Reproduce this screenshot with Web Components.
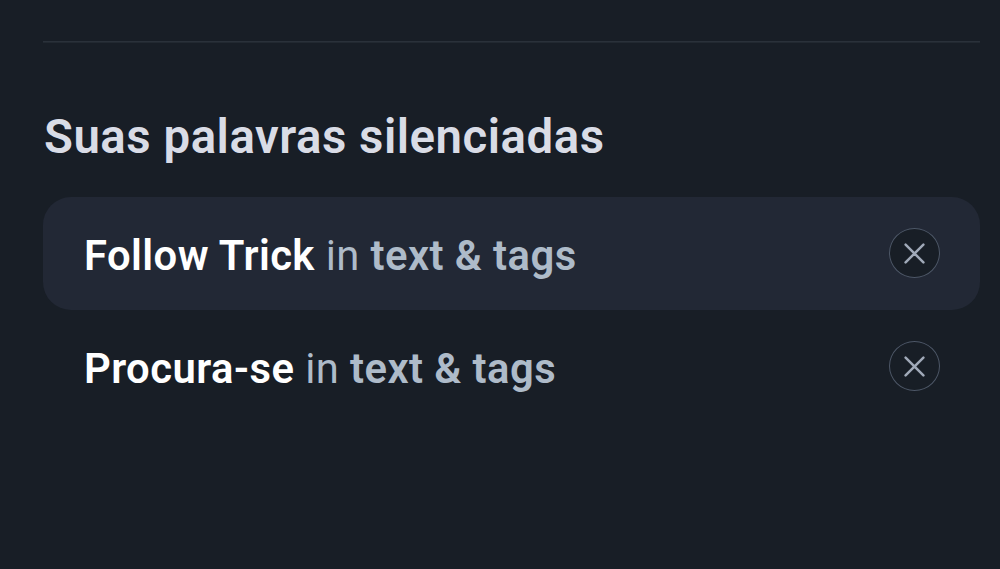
<!DOCTYPE html>
<html lang="pt-BR">
<head>
<meta charset="utf-8">
<title>Palavras silenciadas</title>
<style>
  body {
    margin: 0;
    background: #181e26;
    font-family: Roboto, "Liberation Sans", sans-serif;
  }
</style>
</head>
<body>
<muted-words>
  <span slot="title">Suas palavras silenciadas</span>
  <muted-word-row active>Follow Trick<span slot="target">text &amp; tags</span></muted-word-row>
  <muted-word-row>Procura-se<span slot="target">text &amp; tags</span></muted-word-row>
</muted-words>

<script>
class MutedWords extends HTMLElement {
  constructor() {
    super();
    this.attachShadow({ mode: 'open' });
    this.shadowRoot.innerHTML = `
      <style>
        :host {
          display: block;
          box-sizing: border-box;
          height: 569px;
          padding: 41px 20px 0 43px;
          overflow: hidden;
        }
        hr {
          margin: 0;
          border: 0;
          height: 2px;
          background: linear-gradient(#2a313a 50%, #222931 50%);
        }
        h2 {
          margin: 64px 0 0;
          padding-left: 1px;
          font-size: 47.4px;
          line-height: 60px;
          font-weight: 600;
          letter-spacing: 0.5px;
          color: #d9dce6;
          white-space: nowrap;
        }
        .list {
          display: flex;
          flex-direction: column;
          margin-top: 30px;
        }
      </style>
      <hr>
      <h2><slot name="title"></slot></h2>
      <div class="list"><slot></slot></div>
    `;
  }
}

class MutedWordRow extends HTMLElement {
  constructor() {
    super();
    this.attachShadow({ mode: 'open' });
    this.shadowRoot.innerHTML = `
      <style>
        :host {
          display: flex;
          align-items: center;
          justify-content: space-between;
          box-sizing: border-box;
          height: 113px;
          padding: 0 40px 0 41px;
          border-radius: 28px;
        }
        :host([active]) {
          background: #222835;
        }
        p {
          margin: 0;
          padding-top: 5px;
          font-size: 41.8px;
          line-height: 54px;
          letter-spacing: 0.42px;
          color: #aebbc9;
          white-space: nowrap;
        }
        b {
          font-weight: 600;
        }
        .word {
          color: #ffffff;
        }
      </style>
      <p><b class="word"><slot></slot></b> in <b><slot name="target"></slot></b></p>
      <remove-button></remove-button>
    `;
  }
}

class RemoveButton extends HTMLElement {
  constructor() {
    super();
    this.attachShadow({ mode: 'open' });
    this.shadowRoot.innerHTML = `
      <style>
        :host {
          display: block;
          width: 51px;
          height: 50px;
          margin-bottom: 1px;
        }
        button {
          display: grid;
          place-items: center;
          box-sizing: border-box;
          width: 100%;
          height: 100%;
          padding: 0;
          border: 1px solid #4d5767;
          border-radius: 50%;
          background: #181e26;
          color: #a0a9b8;
          cursor: pointer;
        }
        svg {
          display: block;
          margin-top: 1px;
        }
      </style>
      <button type="button" aria-label="Remover">
        <svg width="21" height="21" viewBox="0 0 21 21" fill="none" stroke="currentColor" stroke-width="2.5" stroke-linecap="round">
          <path d="M1.6 1.6 19.4 19.4M19.4 1.6 1.6 19.4"/>
        </svg>
      </button>
    `;
  }
}

customElements.define('muted-words', MutedWords);
customElements.define('muted-word-row', MutedWordRow);
customElements.define('remove-button', RemoveButton);
</script>
</body>
</html>
